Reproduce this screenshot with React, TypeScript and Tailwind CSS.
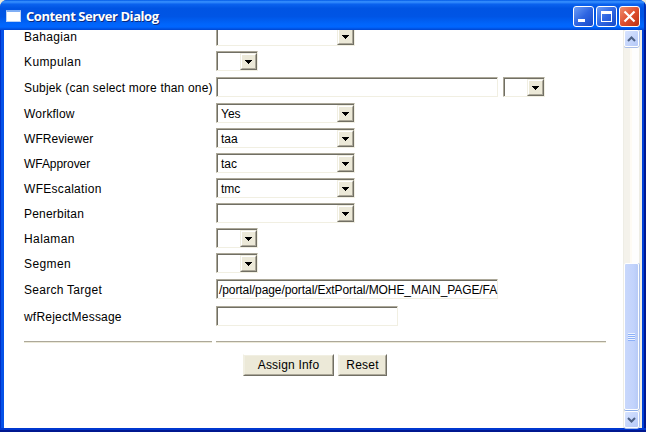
import type { ReactNode } from 'react';

const sunken =
  'border border-t-[#aca899] border-l-[#aca899] border-r-[#f1efe2] border-b-[#f1efe2] bg-white';
const sunkenInner =
  'border-t border-l border-[#716f64] h-full w-full flex';

function Select({ value = '', small = false }: { value?: string; small?: boolean }) {
  return (
    <div className={`${sunken} h-5 shrink-0 ${small ? 'w-[42px]' : 'w-[139px]'}`}>
      <div className={sunkenInner}>
        <span className="flex-1 pl-[3px] leading-[19px]">{value}</span>
        <span className="flex h-[17px] w-[17px] shrink-0 border border-t-[#f1efe2] border-l-[#f1efe2] border-r-[#716f64] border-b-[#716f64]">
          <span className="flex h-full w-full items-center justify-center border border-t-white border-l-white border-r-[#aca899] border-b-[#aca899] bg-[#ece9d8]">
            <svg width="7" height="4" viewBox="0 0 7 4" shapeRendering="crispEdges">
              <path d="M0 0h7v1H6v1H5v1H4v1H3V3H2V2H1V1H0z" fill="#000" />
            </svg>
          </span>
        </span>
      </div>
    </div>
  );
}

function Input({ value = '', wide = false }: { value?: string; wide?: boolean }) {
  return (
    <div className={`${sunken} h-5 shrink-0 ${wide ? 'w-[282px]' : 'w-[182px]'}`}>
      <div className={sunkenInner}>
        <span className="whitespace-nowrap pl-px leading-[19px] tracking-[-0.08px]">{value}</span>
      </div>
    </div>
  );
}

function Row({ label, height = 'h-[25px]', tracking = 'tracking-[0.3px]', children }: {
  label: string;
  height?: string;
  tracking?: string;
  children: ReactNode;
}) {
  return (
    <div className={`flex shrink-0 ${height}`}>
      <span className={`w-48 shrink-0 whitespace-nowrap leading-[23px] ${tracking}`}>{label}</span>
      {children}
    </div>
  );
}

function Button({ children, width }: { children: string; width: string }) {
  return (
    <div className={`${width} h-[22px] border border-t-white border-l-[#f1efe2] border-r-[#716f64] border-b-[#716f64]`}>
      <div className="h-full w-full border border-t-[#f1efe2] border-l-[#f1efe2] border-r-[#aca899] border-b-[#aca899] bg-[#ece9d8] text-center leading-[19px] tracking-[0.2px]">
        {children}
      </div>
    </div>
  );
}

function WindowButton({ close = false, children }: { close?: boolean; children: ReactNode }) {
  return (
    <div
      className={`h-[21px] w-[21px] rounded-[3px] border border-white ${
        close
          ? 'bg-linear-to-br from-[#ee8b6c] via-[#df5030] to-[#bd3010]'
          : 'bg-linear-to-br from-[#6d9cf5] via-[#2f66e2] to-[#1748c8]'
      }`}
    >
      <svg width="19" height="19" viewBox="0 0 19 19">{children}</svg>
    </div>
  );
}

function ScrollButton({ up = false }: { up?: boolean }) {
  return (
    <div className="flex h-[17px] w-[15px] shrink-0 items-center justify-center rounded-[2px] border border-white bg-linear-to-br from-[#d8e4ff] to-[#b5c9f8] shadow-[0_1px_0_#a9bde8,1px_0_0_#b5c8ed]">
      <svg width="9" height="6" viewBox="0 0 9 6">
        <path d={up ? 'M1 5 4.5 1.5 8 5' : 'M1 1 4.5 4.5 8 1'} fill="none" stroke="#4d6185" strokeWidth="2" />
      </svg>
    </div>
  );
}

export default function App() {
  return (
    <div className="h-[432px] w-[646px] overflow-hidden bg-[#ece9d8] font-['Liberation_Sans',Arial,sans-serif] text-[12px] text-black">
      <div className="flex h-full w-full flex-col overflow-hidden rounded-t-[7px] bg-[#0046dc]">
        <header className="flex h-[30px] shrink-0 items-start bg-[linear-gradient(180deg,#0058e6_0%,#3a93ff_6%,#0a62ee_14%,#0054e3_28%,#0055e5_55%,#0065fb_80%,#0066ff_90%,#0046d0_100%)] pl-[6px] pr-[6px] shadow-[inset_-2px_0_0_#0030b5]">
          <div className="mt-[10px] h-3 w-[15px] border border-[#b9d1f5] border-t-2 border-t-[#7faef5] bg-white" />
          <h1 className="ml-[5px] mt-[6px] flex-1 whitespace-nowrap font-['Open_Sans',sans-serif] text-[13px] font-bold leading-[21px] tracking-[-0.43px] text-white [text-shadow:1px_1px_0_#0a2a80]">
            Content Server Dialog
          </h1>
          <div className="mt-[6px] flex gap-[2px]">
            <WindowButton>
              <path d="M4 12h7v3H4z" fill="#fff" />
            </WindowButton>
            <WindowButton>
              <path d="M4 4h11v11H4zM5 7v7h9V7z" fill="#fff" fillRule="evenodd" />
            </WindowButton>
            <WindowButton close>
              <path d="M4.5 4.5l10 10M14.5 4.5l-10 10" stroke="#fff" strokeWidth="2.2" />
            </WindowButton>
          </div>
        </header>

        <div className="flex h-[402px] bg-[linear-gradient(90deg,#0030c8_0px,#0030c8_1px,#0552e8_1px,#0552e8_50%,#0040d8_50%,#0040d8_644px,#001890_644px)] px-1 pb-1 shadow-[inset_0_-2px_0_#001890,inset_0_-4px_0_#0038d0]">
          <main className="flex flex-1 flex-col overflow-hidden bg-white pl-5">
            <div className="-mt-1 flex shrink-0 flex-col">
              <Row label="Bahagian"><Select /></Row>
              <Row label="Kumpulan" height="h-[26px]" tracking="tracking-[0.4px]"><Select small /></Row>
              <Row label="Subjek (can select more than one)" height="h-[26px]" tracking="tracking-[0.18px]">
                <Input wide />
                <div className="w-[5px]" />
                <Select small />
              </Row>
              <Row label="Workflow" tracking="tracking-[0.2px]"><Select value="Yes" /></Row>
              <Row label="WFReviewer" tracking="tracking-[0.05px]"><Select value="taa" /></Row>
              <Row label="WFApprover" tracking="tracking-[-0.05px]"><Select value="tac" /></Row>
              <Row label="WFEscalation"><Select value="tmc" /></Row>
              <Row label="Penerbitan" tracking="tracking-[0.2px]"><Select /></Row>
              <Row label="Halaman" tracking="tracking-[0.4px]"><Select small /></Row>
              <Row label="Segmen" height="h-[26px]" tracking="tracking-[0.4px]"><Select small /></Row>
              <Row label="Search Target" height="h-[27px]" tracking="tracking-[0.27px]">
                <Input wide value="/portal/page/portal/ExtPortal/MOHE_MAIN_PAGE/FA" />
              </Row>
              <Row label="wfRejectMessage" height="h-[35px]" tracking="tracking-[0.2px]"><Input /></Row>
            </div>
            <div className="flex shrink-0 gap-1">
              <div className="h-[2px] w-[188px] border-t border-b border-t-[#aca899] border-b-[#ece9d8]" />
              <div className="h-[2px] w-[390px] border-t border-b border-t-[#aca899] border-b-[#ece9d8]" />
            </div>
            <div className="mt-[11px] flex shrink-0 gap-1 pl-[219px]">
              <Button width="w-[91px]">Assign Info</Button>
              <Button width="w-[49px]">Reset</Button>
            </div>
          </main>
          <aside className="flex w-[19px] shrink-0 flex-col border-l border-[#eeede5] bg-[linear-gradient(90deg,#f4f2eb_0px,#f4f2eb_6px,#fefbf4_6px,#fefbf4_8px,#fefefe_8px,#fefefe_15px,#eeede5_15px,#eeede5_18px)]">
            <ScrollButton up />
            <div className="flex-1" />
            <div className="flex h-[147px] w-[15px] shrink-0 flex-col items-center justify-center rounded-[2px] border border-white bg-[linear-gradient(90deg,#c9d8fc,#c2d3fc_65%,#b8cbf6)] shadow-[0_1px_0_#8eafe8,1px_0_0_#a9bfe8]">
              <div className="h-2 w-[7px] bg-[repeating-linear-gradient(180deg,#eef4fe_0px,#eef4fe_1px,#8cb0f8_1px,#8cb0f8_2px)]" />
            </div>
            <div className="h-px shrink-0" />
            <ScrollButton />
          </aside>
        </div>
      </div>
    </div>
  );
}
